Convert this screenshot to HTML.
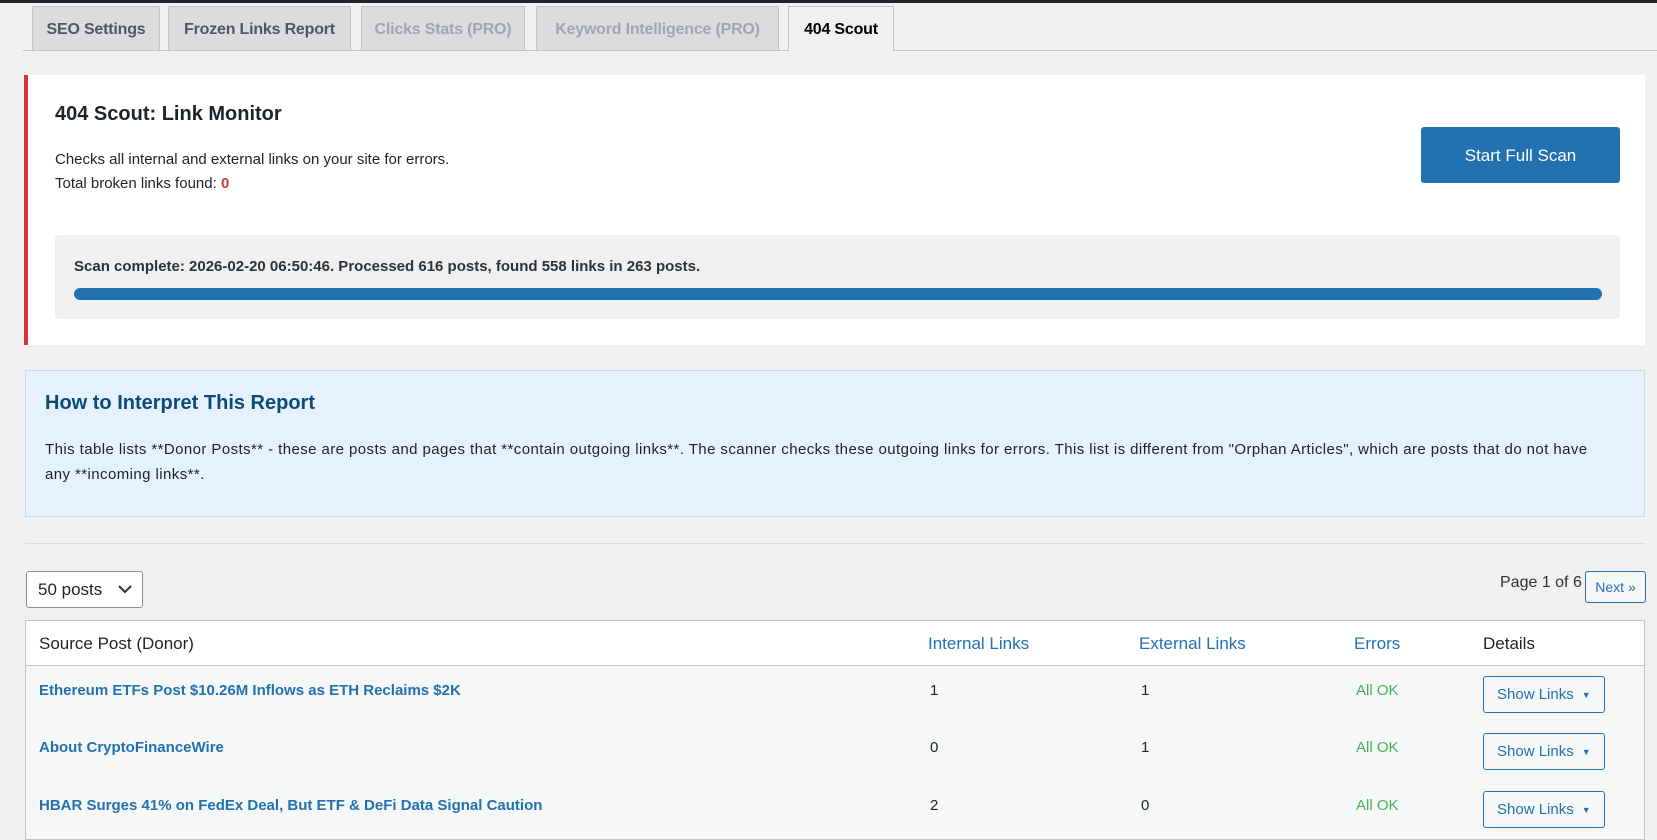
<!DOCTYPE html>
<html><head><meta charset="utf-8"><style>
*{box-sizing:border-box;margin:0;padding:0}
body{width:1657px;height:833px;overflow:hidden;background:#f0f0f1;font-family:"Liberation Sans",sans-serif;color:#1d2327;position:relative}
.a{position:absolute}
.topbar{left:0;top:0;width:1657px;height:3px;background:#1d2327}
.tab{top:6px;height:44px;border:1px solid #c3c4c7;border-bottom:none;background:#dcdcde;font-size:16px;font-weight:bold;color:#50575e;line-height:45px;text-align:center;letter-spacing:-0.2px}
.tab.dis{color:#a0a5aa}
.tab.act{background:#f0f0f1;color:#000;height:45px;z-index:2}
.tabline{left:23px;top:50px;width:1634px;height:1px;background:#c3c4c7}
.card{left:24px;top:75px;width:1621px;height:270px;background:#fff;border-left:4px solid #d63638}
.btn{left:1421px;top:127px;width:199px;height:56px;background:#2271b1;color:#fff;border-radius:3px;font-size:17px;line-height:57px;text-align:center}
.scan{left:55px;top:235px;width:1565px;height:84px;background:#f0f0f1;border-radius:4px}
.bar{left:74px;top:288px;width:1528px;height:12px;background:#2271b1;border-radius:6px}
.info{left:25px;top:370px;width:1620px;height:147px;background:#e5f1fd;border:1px solid #c3dcf5}
.table{left:25px;top:620px;width:1620px;height:220px;background:#f6f7f7;border:1px solid #c3c4c7}
.th{font-size:17px;top:634px}
.link{color:#2271b1;font-weight:bold;font-size:15px}
.num{font-size:15px}
.ok{color:#46b450;font-size:15px}
.sl{width:122px;height:37px;border:1px solid #2271b1;border-radius:3px;background:#f6f7f7;color:#2271b1;font-size:15px;line-height:36px;padding-left:13px}
.sl span{font-size:9px;margin-left:8px;vertical-align:1px}
</style></head><body>
<div class="a topbar"></div>
<div class="a tab" style="left:32px;width:128px">SEO Settings</div>
<div class="a tab" style="left:168px;width:183px">Frozen Links Report</div>
<div class="a tab dis" style="left:361px;width:164px">Clicks Stats (PRO)</div>
<div class="a tab dis" style="left:536px;width:243px">Keyword Intelligence (PRO)</div>
<div class="a tab act" style="left:788px;width:106px">404 Scout</div>
<div class="a tabline"></div>

<div class="a card"></div>
<div class="a" style="left:55px;top:103px;font-size:20px;font-weight:bold">404 Scout: Link Monitor</div>
<div class="a" style="left:55px;top:151px;font-size:15px">Checks all internal and external links on your site for errors.</div>
<div class="a" style="left:55px;top:175px;font-size:15px">Total broken links found: <span style="color:#d63638;font-weight:bold">0</span></div>
<div class="a btn">Start Full Scan</div>
<div class="a scan"></div>
<div class="a" style="left:74px;top:258px;font-size:15px;font-weight:bold;color:#2c3338">Scan complete: 2026-02-20 06:50:46. Processed 616 posts, found 558 links in 263 posts.</div>
<div class="a bar"></div>

<div class="a info"></div>
<div class="a" style="left:45px;top:392px;font-size:20px;font-weight:bold;color:#0a4b78">How to Interpret This Report</div>
<div class="a" style="left:45px;top:438px;width:1600px;font-size:15px;line-height:24.5px;letter-spacing:0.42px;color:#1d2327;white-space:nowrap">This table lists **Donor Posts** - these are posts and pages that **contain outgoing links**. The scanner checks these outgoing links for errors. This list is different from "Orphan Articles", which are posts that do not have<br>any **incoming links**.</div>

<div class="a" style="left:25px;top:543px;width:1620px;height:1px;background:#dcdcde"></div>
<div class="a" style="left:26px;top:571px;width:117px;height:37px;border:1px solid #8c8f94;border-radius:3px;background:#fff;font-size:17px;line-height:36px;padding-left:11px">50 posts
<svg style="position:absolute;right:10px;top:13px" width="14" height="9" viewBox="0 0 14 9"><path d="M1 1l6 6 6-6" fill="none" stroke="#2c3338" stroke-width="2"/></svg></div>
<div class="a" style="left:1500px;top:574px;font-size:16px;color:#2c3338">Page 1 of 6</div>
<div class="a" style="left:1585px;top:571px;width:61px;height:32px;border:1px solid #2271b1;border-radius:3px;background:#f6f7f7;color:#2271b1;font-size:14px;line-height:31px;text-align:center">Next »</div>

<div class="a table"></div>
<div class="a" style="left:26px;top:621px;width:1618px;height:45px;background:#fff;border-bottom:1px solid #c3c4c7"></div>
<div class="a th" style="left:39px">Source Post (Donor)</div>
<div class="a th" style="left:928px;color:#2271b1">Internal Links</div>
<div class="a th" style="left:1139px;color:#2271b1">External Links</div>
<div class="a th" style="left:1354px;color:#2271b1">Errors</div>
<div class="a th" style="left:1483px">Details</div>

<div class="a link" style="left:39px;top:682px">Ethereum ETFs Post $10.26M Inflows as ETH Reclaims $2K</div>
<div class="a num" style="left:930px;top:682px">1</div>
<div class="a num" style="left:1141px;top:682px">1</div>
<div class="a ok" style="left:1356px;top:682px">All OK</div>
<div class="a sl" style="left:1483px;top:676px">Show Links<span>▼</span></div>

<div class="a link" style="left:39px;top:739px">About CryptoFinanceWire</div>
<div class="a num" style="left:930px;top:739px">0</div>
<div class="a num" style="left:1141px;top:739px">1</div>
<div class="a ok" style="left:1356px;top:739px">All OK</div>
<div class="a sl" style="left:1483px;top:733px">Show Links<span>▼</span></div>

<div class="a link" style="left:39px;top:797px">HBAR Surges 41% on FedEx Deal, But ETF &amp; DeFi Data Signal Caution</div>
<div class="a num" style="left:930px;top:797px">2</div>
<div class="a num" style="left:1141px;top:797px">0</div>
<div class="a ok" style="left:1356px;top:797px">All OK</div>
<div class="a sl" style="left:1483px;top:791px">Show Links<span>▼</span></div>
</body></html>
